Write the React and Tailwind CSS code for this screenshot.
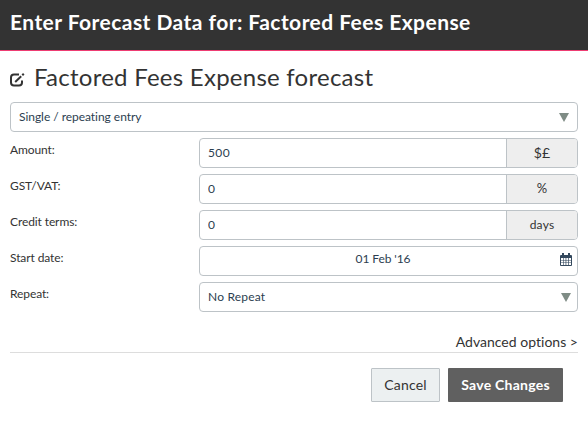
import { useState } from 'react';

function EditIcon() {
    return (
        <svg className="w-[15px] h-[14px] shrink-0" viewBox="0 0 15 14" fill="none" stroke="#333" strokeWidth="2">
            <path d="M9 1.5H4Q1 1.5 1 4.5V9.5Q1 12.5 4 12.5H9Q12 12.5 12 9.5V7.5" />
            <path d="M5.2 8.9L11.2 3.2" strokeWidth="2" />
            <path d="M12.3 2.3L13.8 .8" strokeWidth="2" />
        </svg>
    );
}

function CalendarIcon() {
    return (
        <svg className="w-[12px] h-[13px]" viewBox="0 0 12 13" fill="#34495e">
            <path d="M1 2h10a1 1 0 0 1 1 1v9a1 1 0 0 1-1 1H1a1 1 0 0 1-1-1V3a1 1 0 0 1 1-1z" />
            <path d="M2 0h2v4H2zM8 0h2v4H8z" />
            <path
                d="M1 5h2v2H1zM3.6 5h2v2H3.6zM6.3 5h2v2H6.3zM9 5h2v2H9zM1 7.5h2v2H1zM3.6 7.5h2v2H3.6zM6.3 7.5h2v2H6.3zM9 7.5h2v2H9zM1 10h2v2H1zM3.6 10h2v2H3.6zM6.3 10h2v2H6.3zM9 10h2v2H9z"
                fill="#fff"
            />
        </svg>
    );
}

function Arrow() {
    return (
        <svg className="w-[10px] h-[9px]" viewBox="0 0 10 9" fill="#7f8c85">
            <path d="M0 0h10L5 9z" />
        </svg>
    );
}

function Row({ label, children }) {
    return (
        <div className="flex h-[30px]">
            <div className="w-[189px] shrink-0 pt-1 leading-4 tracking-[-0.1px] text-[#333]">{label}</div>
            <div className="flex flex-1 min-w-0 border border-[#bdc3c7] rounded-[4px] overflow-hidden">{children}</div>
        </div>
    );
}

function Amount({ label, unit, start, unitClass }) {
    const [value, setValue] = useState(start);

    return (
        <Row label={label}>
            <input
                value={value}
                onChange={e => setValue(e.target.value)}
                className="flex-1 min-w-0 px-2 pb-px outline-none tracking-[0.4px]"
            />
            <div
                className={`w-[72px] shrink-0 border-l border-[#bdc3c7] bg-[#eee] text-[#333] flex items-center justify-center -mr-px pr-px ${unitClass}`}
            >
                {unit}
            </div>
        </Row>
    );
}

export default function App() {
    return (
        <div className="h-[424px] bg-white font-['Lato',sans-serif] text-[12px] tracking-[0.2px] text-[#2c3e50]">
            <header className="h-[51px] bg-[#333] border-b border-[#ee3d73] px-[10px] flex items-center">
                <h1 className="text-[21px] leading-6 pb-[6px] font-bold tracking-[0.45px] text-white whitespace-nowrap">
                    Enter Forecast Data for: Factored Fees Expense
                </h1>
            </header>

            <main className="px-[10px]">
                <div className="h-[51px] flex items-center gap-[9px] pt-[3px] text-[#333]">
                    <span className="pt-[3px]">
                        <EditIcon />
                    </span>
                    <h2 className="text-[24px] leading-7 pb-[2px] tracking-[0.25px] whitespace-nowrap">
                        Factored Fees Expense forecast
                    </h2>
                </div>

                <div className="h-[30px] border border-[#bdc3c7] rounded-[4px] pl-2 pr-2 flex items-center justify-between">
                    <span className="tracking-[-0.04px]">Single / repeating entry</span>
                    <Arrow />
                </div>

                <div className="mt-[6px] flex flex-col gap-[6px]">
                    <Amount label="Amount:" start="500" unit="$£" unitClass="text-[14px] pb-[2px]" />
                    <Amount label="GST/VAT:" start="0" unit="%" unitClass="text-[13px]" />
                    <Amount label="Credit terms:" start="0" unit="days" unitClass="text-[12px]" />
                    <Row label="Start date:">
                        <div className="flex-1 flex items-center pr-[5px]">
                            <span className="flex-1 text-center pb-1 pl-[6px] tracking-[-0.1px]">01 Feb '16</span>
                            <span className="pb-[3px]">
                                <CalendarIcon />
                            </span>
                        </div>
                    </Row>
                    <Row label="Repeat:">
                        <div className="flex-1 flex items-center justify-between pl-2 pr-[6px]">
                            <span>No Repeat</span>
                            <Arrow />
                        </div>
                    </Row>
                </div>

                <div className="h-[41px] border-b border-[#ddd] flex items-end justify-end text-[14px] leading-5 tracking-[0.02px] text-[#333]">
                    Advanced options &gt;
                </div>

                <div className="mt-[15px] pr-[15px] flex justify-end gap-2 text-[14px]">
                    <button className="w-[69px] h-[34px] pb-[2px] bg-[#ecf0f1] border border-[#bdc3c7] rounded-[1px] text-[#333]">
                        Cancel
                    </button>
                    <button className="w-[115px] h-[34px] pb-[2px] bg-[#606060] rounded-[1px] font-bold tracking-[0.25px] text-white">
                        Save Changes
                    </button>
                </div>
            </main>
        </div>
    );
}
